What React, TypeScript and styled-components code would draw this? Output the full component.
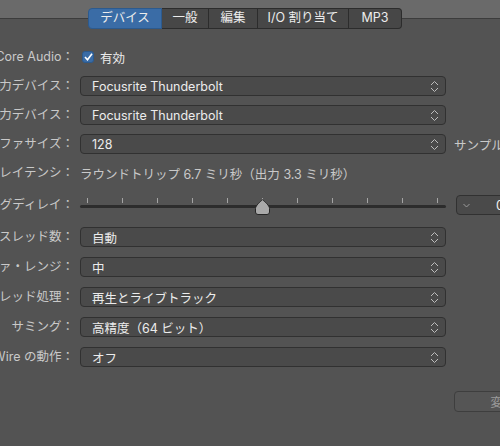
import React from "react";
import styled, { createGlobalStyle } from "styled-components";

const Global = createGlobalStyle`
  html, body { margin: 0; padding: 0; background: #535353; }
  body { width: 500px; height: 446px; overflow: hidden; }
`;

const Window = styled.div`
  width: 500px;
  height: 446px;
  overflow: hidden;
  background: #535353;
  font-family: Inter, "Noto Sans CJK JP", sans-serif;
  font-size: 12.5px;
  color: #e4e4e4;
`;

const Header = styled.div`
  display: flex;
  padding: 8px 0 0 88px;
  background: linear-gradient(
    to bottom,
    #6a6a6a 0,
    #6a6a6a 18px,
    #3c3c3c 18px,
    #3c3c3c 19px,
    #535353 19px
  );
`;

const Tab = styled.div<{ $w: number; $active?: boolean }>`
  width: ${(p) => p.$w}px;
  height: 21px;
  box-sizing: border-box;
  display: flex;
  align-items: center;
  justify-content: center;
  line-height: 1;
  color: #ececec;
  background: ${(p) => (p.$active ? "#3a6ca6" : "#474747")};
  border: 1px solid ${(p) => (p.$active ? "#2c5a8e" : "#2c2c2c")};
  border-left-width: ${(p) => (p.$active ? "1px" : "0")};
  &:first-child { border-radius: 4px 0 0 4px; }
  &:last-child { border-radius: 0 4px 4px 0; }
`;

const Form = styled.div`
  display: flex;
  flex-direction: column;
  margin-top: 18px;
`;

const Row = styled.div<{ $mt?: number }>`
  display: grid;
  grid-template-columns: 74px 366px 1fr;
  column-gap: 6px;
  height: 20px;
  align-items: center;
  margin-top: ${(p) => p.$mt ?? 0}px;
`;

const Label = styled.div`
  display: flex;
  justify-content: flex-end;
  white-space: nowrap;
  color: #c9c9c9;
  line-height: 20px;
`;

const Popup = styled.div`
  height: 20px;
  box-sizing: border-box;
  display: flex;
  align-items: center;
  justify-content: space-between;
  padding: 0 6px 0 11px;
  background: #4a4a4a;
  border: 1px solid #313131;
  border-radius: 4px;
  color: #ececec;
  white-space: nowrap;
`;

const CheckRow = styled.div`
  display: flex;
  align-items: center;
  gap: 6px;
  padding-left: 2px;
  color: #ececec;
`;

const Check = styled.div`
  width: 12px;
  height: 12px;
  box-sizing: border-box;
  border-radius: 3px;
  background: #3a6ca6;
  border: 1px solid #2c5a8e;
  display: flex;
  align-items: center;
  justify-content: center;
`;

const PlainText = styled.div`
  color: #c9c9c9;
  white-space: nowrap;
`;

const Side = styled.div<{ $ml?: number }>`
  margin-left: ${(p) => p.$ml ?? 2}px;
  color: #c9c9c9;
  white-space: nowrap;
`;

const Slider = styled.div`
  position: relative;
  height: 20px;
`;

const Ticks = styled.div`
  display: flex;
  justify-content: space-between;
  padding: 3px 8px 0 7px;
`;

const Tick = styled.div`
  width: 1px;
  height: 5px;
  background: #a4a4a4;
`;

const Track = styled.div`
  margin-top: 2px;
  height: 3px;
  border-radius: 2px;
  background: #2c2c2c;
`;

const Thumb = styled.svg`
  position: absolute;
  left: 175px;
  top: 4px;
`;

const NumBox = styled.div`
  margin-left: 4px;
  width: 90px;
  height: 20px;
  box-sizing: border-box;
  display: flex;
  align-items: center;
  padding-left: 6px;
  background: #4a4a4a;
  border: 1px solid #313131;
  border-radius: 4px;
  color: #f0f0f0;
`;

const NumValue = styled.span`
  margin-left: 26px;
`;

const ApplyButton = styled.div`
  margin-left: 2px;
  width: 135px;
  height: 21px;
  box-sizing: border-box;
  display: flex;
  align-items: center;
  justify-content: center;
  background: #555555;
  border: 1px solid #3e3e3e;
  border-radius: 4px;
  color: #9a9a9a;
  white-space: nowrap;
`;

const UpDown = () => (
  <svg width="9" height="13" viewBox="0 0 9 13">
    <polyline points="1,5 4.5,1.5 8,5" fill="none" stroke="#bdbdbd" strokeWidth="1" />
    <polyline points="1,8 4.5,11.5 8,8" fill="none" stroke="#bdbdbd" strokeWidth="1" />
  </svg>
);

const Down = () => (
  <svg width="7" height="5" viewBox="0 0 7 5">
    <polyline points="0.5,1 3.5,4 6.5,1" fill="none" stroke="#9a9a9a" strokeWidth="1" />
  </svg>
);

const Select = ({ value }: { value: string }) => (
  <Popup>
    <span>{value}</span>
    <UpDown />
  </Popup>
);

export default function App() {
  const tabs = [
    { t: "デバイス", w: 74, a: true },
    { t: "一般", w: 47 },
    { t: "編集", w: 49 },
    { t: "I/O 割り当て", w: 91 },
    { t: "MP3", w: 53 },
  ];
  return (
    <Window>
      <Global />
      <Header>
        {tabs.map((t) => (
          <Tab key={t.t} $w={t.w} $active={t.a}>
            {t.t}
          </Tab>
        ))}
      </Header>
      <Form>
        <Row>
          <Label>Core Audio：</Label>
          <CheckRow>
            <Check>
              <svg width="9" height="8" viewBox="0 0 9 8">
                <polyline points="1,4 3.5,6.8 8,0.8" fill="none" stroke="#fff" strokeWidth="1.6" />
              </svg>
            </Check>
            <span>有効</span>
          </CheckRow>
        </Row>
        <Row $mt={9}>
          <Label>出力デバイス：</Label>
          <Select value="Focusrite Thunderbolt" />
        </Row>
        <Row $mt={9}>
          <Label>入力デバイス：</Label>
          <Select value="Focusrite Thunderbolt" />
        </Row>
        <Row $mt={9}>
          <Label>I/O バッファサイズ：</Label>
          <Select value="128" />
          <Side>サンプル</Side>
        </Row>
        <Row $mt={9}>
          <Label>結果のレイテンシ：</Label>
          <PlainText>ラウンドトリップ 6.7 ミリ秒（出力 3.3 ミリ秒）</PlainText>
        </Row>
        <Row $mt={12}>
          <Label>レコーディングディレイ：</Label>
          <Slider>
            <Ticks>
              {Array.from({ length: 11 }).map((_, i) => (
                <Tick key={i} />
              ))}
            </Ticks>
            <Track />
            <Thumb width="15" height="16" viewBox="0 0 15 16">
              <path
                d="M7.5 0.7 C9.5 2.5 14.5 6.5 14.5 9.5 L14.5 13 Q14.5 15.5 12 15.5 L3 15.5 Q0.5 15.5 0.5 13 L0.5 9.5 C0.5 6.5 5.5 2.5 7.5 0.7 Z"
                fill="#a9a9a9"
                stroke="#262626"
                strokeWidth="1"
              />
            </Thumb>
          </Slider>
          <NumBox>
            <Down />
            <NumValue>0</NumValue>
          </NumBox>
        </Row>
        <Row $mt={12}>
          <Label>プロセススレッド数：</Label>
          <Select value="自動" />
        </Row>
        <Row $mt={10}>
          <Label>プロセスバッファ・レンジ：</Label>
          <Select value="中" />
        </Row>
        <Row $mt={10}>
          <Label>マルチスレッド処理：</Label>
          <Select value="再生とライブトラック" />
        </Row>
        <Row $mt={10}>
          <Label>サミング：</Label>
          <Select value="高精度（64 ビット）" />
        </Row>
        <Row $mt={10}>
          <Label>ReWire の動作：</Label>
          <Select value="オフ" />
        </Row>
        <Row $mt={24}>
          <span />
          <span />
          <ApplyButton>変更を適用</ApplyButton>
        </Row>
      </Form>
    </Window>
  );
}
